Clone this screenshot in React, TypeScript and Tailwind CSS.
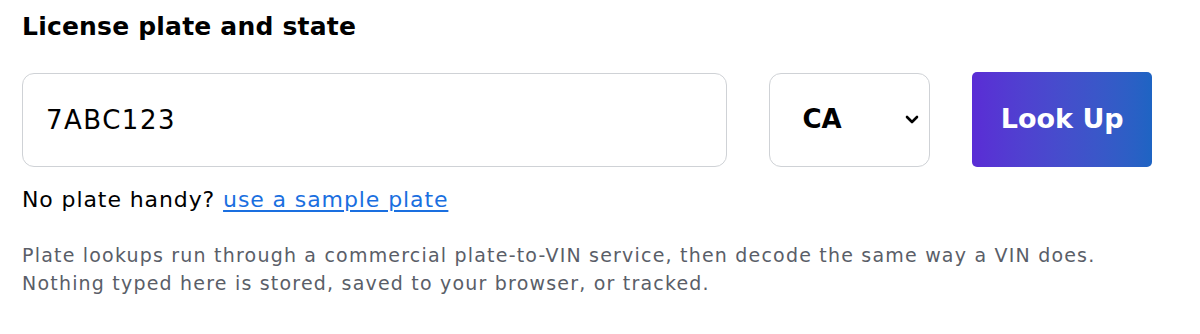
import { useState } from "react";

export default function App() {
  const [plate, setPlate] = useState("7ABC123");
  const [state, setState] = useState("CA");

  return (
    <div className="w-[1200px] h-[334px] bg-white pl-[22px] pt-[10px] font-['DejaVu_Sans',sans-serif] text-black">
      <h2 className="text-[25px] leading-[34px] font-bold tracking-[0.2px]">License plate and state</h2>

      <div className="flex items-center mt-[28px] w-[1130px]">
        <input
          value={plate}
          onChange={(e) => setPlate(e.target.value)}
          className="w-[707px] h-[94px] rounded-[12px] border border-[#cfd2d6] pl-[23px] text-[26px] tracking-[1.5px] outline-none"
        />
        <div className="relative ml-[42px]">
          <select
            value={state}
            onChange={(e) => setState(e.target.value)}
            className="appearance-none w-[161px] h-[94px] rounded-[12px] border border-[#cfd2d6] bg-white pl-[32px] text-[26px] font-semibold outline-none"
          >
            <option>CA</option>
            <option>NY</option>
            <option>TX</option>
          </select>
          {/* chevron */}
          <svg
            className="absolute right-[10px] top-[41px] pointer-events-none"
            width="16"
            height="12"
            viewBox="0 0 16 12"
          >
            <path d="M3 3l5 5 5-5" fill="none" stroke="#000" strokeWidth="2.6" strokeLinecap="round" strokeLinejoin="round" />
          </svg>
        </div>
        <button className="ml-[42px] w-[180px] h-[95px] rounded-[5px] bg-linear-to-r from-[#5a2cd5] to-[#1e64c3] text-white text-[27px] font-semibold">
          Look Up
        </button>
      </div>

      <p className="mt-[18px] text-[22px] leading-[30px] tracking-[0.9px]">
        No plate handy?{" "}
        <a href="#" className="text-[#1a6fe0] underline underline-offset-[3px]">
          use a sample plate
        </a>
      </p>

      <p className="mt-[26px] text-[19px] leading-[28px] tracking-[1.2px] text-[#5a5e68]">
        Plate lookups run through a commercial plate-to-VIN service, then decode the same way a VIN does.
        <br />
        Nothing typed here is stored, saved to your browser, or tracked.
      </p>
    </div>
  );
}
